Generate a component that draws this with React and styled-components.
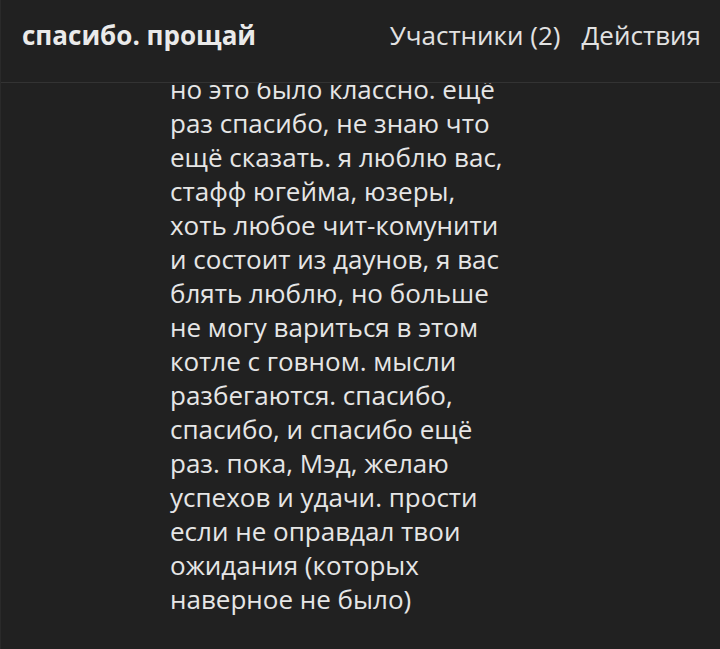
import styled, { createGlobalStyle } from "styled-components";

const GlobalStyle = createGlobalStyle`
  html, body {
    margin: 0;
    padding: 0;
    background: #212121;
  }
  body {
    font-family: "Open Sans", "Noto Sans", sans-serif;
  }
`;

const Screen = styled.div`
  width: 720px;
  height: 649px;
  display: flex;
  flex-direction: column;
  background: #212121;
  border-left: 1px solid #2a2a2a;
  box-sizing: border-box;
  overflow: hidden;
`;

const Header = styled.header`
  flex: 0 0 83px;
  display: flex;
  align-items: center;
  justify-content: space-between;
  padding: 0 19px 12px 21px;
  box-sizing: border-box;
  border-bottom: 1px solid #333;
`;

const Title = styled.h1`
  margin: 0;
  font-size: 26px;
  font-weight: 700;
  color: #eaeaea;
`;

const Nav = styled.nav`
  display: flex;
  gap: 21px;
`;

const NavItem = styled.span`
  font-size: 26px;
  color: #e2e2e2;
  cursor: pointer;
`;

const Feed = styled.main`
  flex: 1;
  min-height: 0;
  display: flex;
  flex-direction: column;
  justify-content: flex-end;
  overflow: hidden;
  padding: 0 0 33px 169px;
`;

const Message = styled.p`
  margin: 0;
  font-size: 26px;
  line-height: 34px;
  color: #e6e6e6;
  white-space: pre-line;
`;

const text = `но это было классно. ещё
раз спасибо, не знаю что
ещё сказать. я люблю вас,
стафф югейма, юзеры,
хоть любое чит-комунити
и состоит из даунов, я вас
блять люблю, но больше
не могу вариться в этом
котле с говном. мысли
разбегаются. спасибо,
спасибо, и спасибо ещё
раз. пока, Мэд, желаю
успехов и удачи. прости
если не оправдал твои
ожидания (которых
наверное не было)`;

export default function App() {
  return (
    <>
      <GlobalStyle />
      <Screen>
        <Header>
          <Title>спасибо. прощай</Title>
          <Nav>
            <NavItem>Участники (2)</NavItem>
            <NavItem>Действия</NavItem>
          </Nav>
        </Header>
        <Feed>
          <Message>{text}</Message>
        </Feed>
      </Screen>
    </>
  );
}
